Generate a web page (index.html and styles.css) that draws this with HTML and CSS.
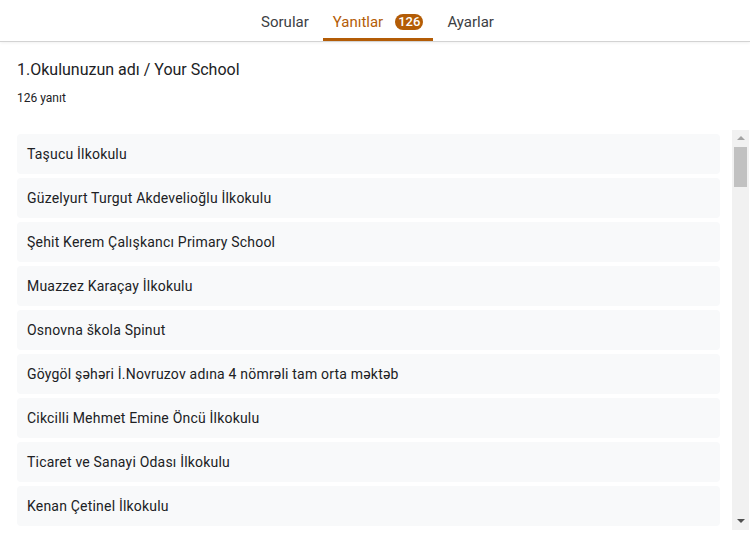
FILE: index.html
```html
<!DOCTYPE html>
<html lang="tr">
<head>
  <meta charset="UTF-8" />
  <meta name="viewport" content="width=device-width, initial-scale=1.0" />
  <title>Yanıtlar</title>
  <link rel="stylesheet" href="styles.css">
</head>
<body>

  <div class="tabs">
    <a href="#" class="tab">Sorular</a>
    <a href="#" class="tab active">Yanıtlar <span class="badge">126</span></a>
    <a href="#" class="tab">Ayarlar</a>
  </div>

  <div class="main">
    <div class="question-title">1.Okulunuzun adı / Your School</div>
    <div class="answer-count">126 yanıt</div>

    <div class="answers-box">
      <ul class="answers">
        <li>Taşucu İlkokulu</li>
        <li>Güzelyurt Turgut Akdevelioğlu İlkokulu</li>
        <li>Şehit Kerem Çalışkancı Primary School</li>
        <li>Muazzez Karaçay İlkokulu</li>
        <li>Osnovna škola Spinut</li>
        <li>Göygöl şəhəri İ.Novruzov adına 4 nömrəli tam orta məktəb</li>
        <li>Cikcilli Mehmet Emine Öncü İlkokulu</li>
        <li>Ticaret ve Sanayi Odası İlkokulu</li>
        <li>Kenan Çetinel İlkokulu</li>
      </ul>

      <!-- scrollbar -->
      <div class="scrollbar">
        <span class="scroll-btn"><span class="arrow up"></span></span>
        <div class="scroll-track"><div class="scroll-thumb"></div></div>
        <span class="scroll-btn"><span class="arrow down"></span></span>
      </div>
    </div>
  </div>

</body>
</html>
```

FILE: styles.css
```css
* {
  box-sizing: border-box;
  margin: 0;
  padding: 0;
  font-family: Roboto, 'Noto Sans', sans-serif;
}

body {
  background-color: #ffffff;
  color: #202124;
  height: 100vh;
  display: flex;
  flex-direction: column;
}

.tabs {
  height: 42px;
  display: flex;
  justify-content: center;
  gap: 4px;
  padding-left: 5px;
  border-bottom: 1px solid #d3d3d3;
  box-shadow: 0 1px 3px rgba(0, 0, 0, 0.06);
  flex-shrink: 0;
}

.tab {
  display: flex;
  align-items: center;
  gap: 12px;
  padding: 6px 10px 0;
  font-size: 15px;
  color: #3c4043;
  text-decoration: none;
  border-bottom: 3px solid transparent;
}

.tab.active {
  color: #b35c06;
  border-bottom-color: #b35c06;
}

.badge {
  background-color: #b35c06;
  color: #fff;
  font-size: 13px;
  font-weight: 500;
  line-height: 16px;
  padding: 0 3px;
  border-radius: 9px;
}

.main {
  flex: 1;
  min-height: 0;
  display: flex;
  flex-direction: column;
  padding: 16px 1px 11px 17px;
}

.question-title {
  font-size: 16px;
  line-height: 24px;
}

.answer-count {
  font-size: 12px;
  line-height: 16px;
  margin-top: 8px;
  margin-bottom: 24px;
}

.answers-box {
  flex: 1;
  min-height: 0;
  display: flex;
}

.answers {
  list-style: none;
  flex: 1;
  overflow: hidden;
  padding: 4px 12px 0 0;
  display: flex;
  flex-direction: column;
  gap: 4px;
}

.answers li {
  flex-shrink: 0;
  height: 40px;
  line-height: 40px;
  padding-left: 10px;
  font-size: 14px;
  letter-spacing: 0.2px;
  background-color: #f8f9fa;
  border-radius: 4px;
  white-space: nowrap;
}

.scrollbar {
  width: 17px;
  background-color: #f1f1f1;
  display: flex;
  flex-direction: column;
}

.scroll-btn {
  height: 17px;
  display: flex;
  justify-content: center;
  padding-top: 6px;
}

.scroll-track {
  flex: 1;
  padding: 0 2px;
}

.scroll-thumb {
  height: 40px;
  background-color: #c1c1c1;
}

.arrow {
  width: 0;
  height: 0;
  border-left: 4px solid transparent;
  border-right: 4px solid transparent;
}

.arrow.up {
  border-bottom: 4px solid #a3a3a3;
}

.arrow.down {
  border-top: 4px solid #505050;
}
```
